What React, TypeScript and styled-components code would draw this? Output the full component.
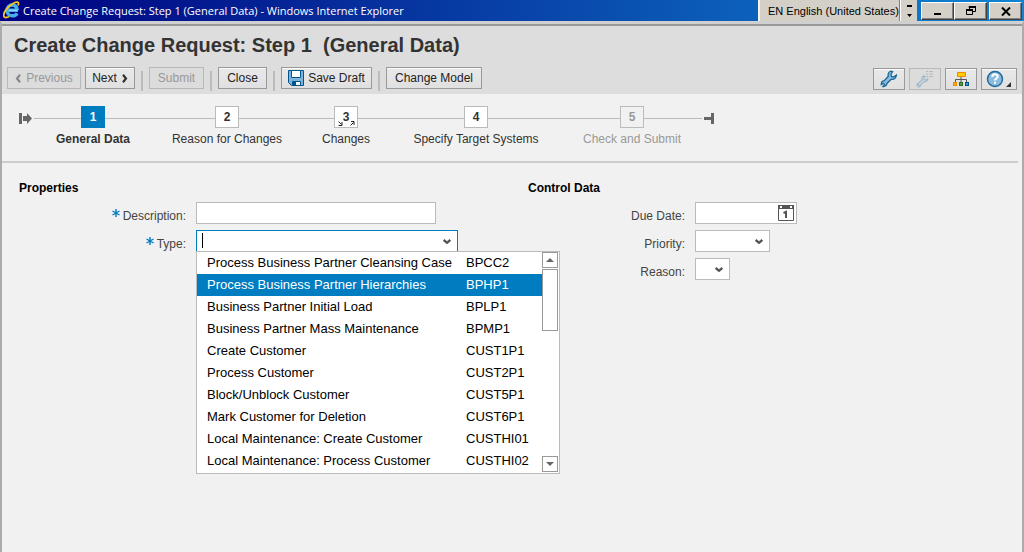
import React from "react";
import styled, { createGlobalStyle } from "styled-components";

const Global = createGlobalStyle`
  * { box-sizing: border-box; }
  body { margin: 0; background: #f1f1f1; color: #333; font: 12px/16px "Liberation Sans", Arial, sans-serif; }
  button, input, select { font: inherit; color: inherit; margin: 0; }
  svg { display: block; flex: none; }
`;

const Page = styled.div`
  display: flex;
  flex-direction: column;
  min-height: 100vh;
`;

const TitleBar = styled.header`
  display: flex;
  height: 21px;
  padding-left: 3px;
  background: linear-gradient(90deg, #000080, #1084d0);
  color: #fff;
`;

const WindowTitle = styled.div`
  flex: 1;
  padding-left: 3px;
  white-space: nowrap;
  font: 11px/21px "Open Sans", "Noto Sans", sans-serif;
`;

const LanguageBar = styled.div`
  display: flex;
  height: 22px;
  margin-right: 4px;
  background: #d4d0c8;
  border-left: 2px solid #f4f2ee;
  color: #000;
`;

const Language = styled.div`
  width: 140px;
  padding-left: 8px;
  border-right: 1px solid #808080;
  font-size: 11px;
  line-height: 22px;
  white-space: nowrap;
`;

const LanguageMenu = styled.button`
  display: flex;
  justify-content: center;
  align-items: center;
  width: 17px;
  padding: 0;
  border: 0;
  border-left: 1px solid #fff;
  background: #d4d0c8;
`;

const CaptionButton = styled.button<{ $spaced?: boolean }>`
  display: flex;
  align-items: center;
  justify-content: center;
  width: 33px;
  height: 18px;
  margin: 2px 0 0 ${(p) => (p.$spaced ? 2 : 0)}px;
  padding: 0;
  background: #d4d0c8;
  border: 1px solid;
  border-color: #fff #404040 #404040 #fff;
  box-shadow: inset -1px -1px #808080;
  &:last-child { margin-right: 2px; }
`;

const Frame = styled.div`
  flex: 1;
  border: 2px solid #ababab;
  border-top: 3px solid #d0d0d0;
  border-bottom: 0;
`;

const Head = styled.div`
  padding: 7px 5px 3px;
  background: #ddd;
  border-top: 2px solid #999;
`;

const Heading = styled.h1`
  margin: 0 0 10px;
  padding-left: 7px;
  font-size: 20px;
  line-height: 24px;
  color: #333;
  white-space: pre;
`;

const Toolbar = styled.div`
  display: flex;
  align-items: flex-start;
  gap: 6px;
`;

const Pair = styled.div`
  display: flex;
  gap: 4px;
`;

const ToolButton = styled.button<{ $w: number }>`
  display: flex;
  align-items: center;
  justify-content: center;
  gap: 4px;
  width: ${(p) => p.$w}px;
  height: 22px;
  padding: 0;
  white-space: nowrap;
  color: #222;
  background: linear-gradient(#e9e9e9, #e0e0e0);
  border: 1px solid #999;
  box-shadow: inset 0 1px #fafafa;
  &:disabled { color: #999; background: #dcdcdc; border-color: #b8b8b8; box-shadow: none; }
`;

const Divider = styled.span`
  width: 2px;
  height: 20px;
  margin-top: 4px;
  background: #bcbcbc;
`;

const Icons = styled.div`
  display: flex;
  gap: 4px;
  margin: 1px 0 0 auto;
`;

const RoadMap = styled.nav`
  display: flex;
  padding: 12px 0 14px 17px;
  margin-right: 4px;
  border-bottom: 2px solid #ccc;
`;

const Steps = styled.ol`
  display: flex;
  margin: 0 2px;
  padding: 0;
  list-style: none;
  background: linear-gradient(#bbb, #bbb) 0 12px / 100% 1px no-repeat;
`;

const Step = styled.li<{ $w: number; $state?: "current" | "disabled" }>`
  display: flex;
  flex-direction: column;
  align-items: center;
  gap: 3px;
  width: ${(p) => p.$w}px;
  white-space: nowrap;
  color: ${(p) => (p.$state === "disabled" ? "#999" : "#333")};
  font-weight: ${(p) => (p.$state === "current" ? "bold" : "normal")};
`;

const StepNumber = styled.span<{ $state?: "current" | "disabled" }>`
  position: relative;
  width: 24px;
  height: 22px;
  border: 1px solid ${(p) => (p.$state === "current" ? "#007cc0" : "#bbb")};
  background: ${(p) => (p.$state === "current" ? "#007cc0" : p.$state === "disabled" ? "#f1f1f1" : "#fff")};
  color: ${(p) => (p.$state === "current" ? "#fff" : "inherit")};
  font-weight: bold;
  line-height: 20px;
  text-align: center;
`;

const Expand = styled.svg`
  position: absolute;
  left: 3px;
  bottom: 1px;
`;

const StepLabel = styled.span`
  line-height: 16px;
`;

const Form = styled.form`
  display: grid;
  grid-template-columns: 509px minmax(280px, 1fr);
  padding: 17px 0 0 17px;
`;

const Group = styled.fieldset`
  display: flex;
  flex-direction: column;
  gap: 6px;
  min-width: 0;
  margin: 0;
  padding: 0;
  border: 0;
`;

const GroupTitle = styled.legend`
  padding: 0 0 6px;
  font-weight: bold;
  color: #000;
`;

const Row = styled.div`
  display: flex;
  gap: 10px;
  height: 22px;
`;

const Label = styled.label`
  display: flex;
  justify-content: flex-end;
  gap: 3px;
  width: 167px;
  line-height: 28px;
  color: #444;
  ${Group} + ${Group} & { width: 157px; }
`;

const Control = styled.div<{ $w: number }>`
  position: relative;
  width: ${(p) => p.$w}px;
  height: 22px;
`;

const Input = styled.input`
  width: 100%;
  height: 22px;
  padding: 0 5px;
  background: #fff;
  border: 1px solid #bbb;
  border-radius: 0;
  outline: 0;
  &[role="combobox"] { border-color: #007cc0; color: #000; }
`;

const Select = styled.select`
  appearance: none;
  width: 100%;
  height: 22px;
  padding: 0 5px;
  background: #fff;
  border: 1px solid #bbb;
  border-radius: 0;
`;

const Adornment = styled.span<{ $right: number; $top: number }>`
  position: absolute;
  right: ${(p) => p.$right}px;
  top: ${(p) => p.$top}px;
  pointer-events: none;
`;

const Caret = styled.span`
  position: absolute;
  left: 6px;
  top: 3px;
  width: 1px;
  height: 15px;
  background: #000;
`;

const Popup = styled.div`
  position: absolute;
  z-index: 1;
  top: 21px;
  left: 0;
  display: flex;
  width: 364px;
  padding-right: 1px;
  background: #fff;
  border: 1px solid #bbb;
`;

const Options = styled.ul`
  flex: 1;
  margin: 0;
  padding: 0 0 1px;
  list-style: none;
`;

const Option = styled.li`
  display: grid;
  grid-template-columns: 259px 1fr;
  padding-left: 10px;
  font-size: 13px;
  line-height: 22px;
  white-space: nowrap;
  color: #000;
  &[aria-selected="true"] { background: #007cc0; color: #fff; }
`;

const ScrollBar = styled.div`
  display: flex;
  flex-direction: column;
  width: 16px;
  padding-bottom: 1px;
`;

const ScrollButton = styled.button`
  display: flex;
  align-items: center;
  justify-content: center;
  width: 16px;
  height: 16px;
  padding: 0;
  background: #fff;
  border: 1px solid #999;
  &:last-child { margin-top: auto; }
`;

const Thumb = styled.div`
  height: 62px;
  margin-top: 1px;
  border: 1px solid #999;
`;

const Chevron = () => (
  <svg width="8" height="6" viewBox="0 0 8 6">
    <path d="M.7 1L4 3.800 7.300 1" fill="none" stroke="#555" strokeWidth="2.400" />
  </svg>
);

const Arrow = ({ left, color }: { left?: boolean; color: string }) => (
  <svg width="7" height="9" viewBox="0 0 7 9">
    <path d={left ? "M5 .7L2 4.5l3 3.8" : "M2 .7l3 3.8-3 3.8"} fill="none" stroke={color} strokeWidth="2.2" />
  </svg>
);

const Required = () => (
  <svg width="8" height="8" viewBox="0 0 8 8">
    <path d="M4 0v8M.5 2l7 4M7.5 2l-7 4" stroke="#007cc0" strokeWidth="1.4" />
  </svg>
);

const RequiredMark = styled.span`
  padding-top: 7px;
`;

const IeLogo = () => (
  <svg width="17" height="20" viewBox="0 0 17 20">
    <path d="M15 10.200H5.200M14.300 10.400C14 6.900 11.900 5 9.200 5c-3.200 0-5.200 2.300-5.200 5.400s2.200 5.400 5.400 5.400c2.200 0 3.800-.9 4.700-2.500" fill="none" stroke="#45b0ea" strokeWidth="3.400" />
    <path d="M14.800 10.200H6" stroke="#a9e2fb" strokeWidth="1" />
    <path d="M15 5.500C16.500 2 14.500 1 10.500 3.200 4.500 6.500-.5 13.200 1 16.600c.7 1.500 3 1 5-.2" fill="none" stroke="#f3c522" strokeWidth="1.800" />
  </svg>
);

const Floppy = () => (
  <svg width="16" height="16" viewBox="0 0 16 16">
    <path d="M.5.5h15v15h-12l-3-3z" fill="#7fb2da" stroke="#00568c" />
    <path d="M3.500.500h9v7h-9z" fill="#fff" stroke="#00568c" />
    <path d="M4.500 11.500h8v4h-8z" fill="#fff" stroke="#00568c" />
    <path d="M5 12h3v3H5z" fill="#00568c" />
  </svg>
);

const wrenchPath =
  "M10.500 1.200C8.500 2.300 7.700 4 8.300 6.300L4.300 10.700C2.400 10.900 1.200 12.300 1.300 14.500L3.200 13.300 4.500 14.600 3 16.500C5.200 16.700 6.700 15.600 6.900 13.400L11.300 9.300C14 9.800 16.300 8.200 16.400 5.100L13.600 7 11.500 6.500 10.900 4.300 12.600 1.700Z";

const Wrench = () => (
  <svg width="18" height="18" viewBox="0 0 18 18">
    <path d={wrenchPath} fill="#8dbbdf" stroke="#1b6797" strokeWidth="1.300" />
  </svg>
);

const WrenchList = () => (
  <svg width="18" height="18" viewBox="0 0 18 18">
    <g transform="translate(0 5) scale(.72)">
      <path d={wrenchPath} fill="#c6d4de" stroke="#9eb8c9" strokeWidth="1.500" />
    </g>
    <path d="M10 1.500h2M13 1.500h4M10 4h2M13 4h4M10 6.500h2M13 6.500h4" stroke="#b8b8b8" />
  </svg>
);

const Hierarchy = () => (
  <svg width="16" height="16" viewBox="0 0 16 16">
    <path d="M8 5v7M2.500 12V8.500h11V12" fill="none" stroke="#555" />
    <path d="M4.500 1.500h8v4h-8z" fill="#fc0" stroke="#f08a00" />
    <path d="M.600 11.600h2.800v2.800H.600z" fill="#fc0" stroke="#f08a00" strokeWidth="1.200" />
    <path d="M6.600 11.600h2.800v2.800H6.600z" fill="#79b943" stroke="#2e6b2e" strokeWidth="1.200" />
    <path d="M12.600 11.600h2.800v2.800h-2.800z" fill="#8dbbdf" stroke="#00568c" strokeWidth="1.200" />
  </svg>
);

const Help = () => (
  <svg width="26" height="18" viewBox="0 0 26 18">
    <circle cx="9" cy="9" r="7.500" fill="#8dbbdf" stroke="#1b6797" strokeWidth="1.400" />
    <path d="M6.300 7C6.300 3.500 11.700 3.600 11.700 6.500 11.700 8.500 9 8.400 9 10.500M9 11.700v2" fill="none" stroke="#fff" strokeWidth="2" />
    <path d="M25 12v5h-5z" fill="#333" />
  </svg>
);

const Calendar = () => (
  <svg width="16" height="16" viewBox="0 0 16 16">
    <path d="M.500.500h15v15H.500z" fill="#fff" stroke="#555" />
    <path d="M0 0h16v4H0z" fill="#555" />
    <path d="M2 1h2v2H2zM12 1h2v2h-2z" fill="#fff" />
    <path d="M5.500 8L8 6.800V13" fill="none" stroke="#555" strokeWidth="2" />
  </svg>
);

const types: [string, string][] = [
  ["Process Business Partner Cleansing Case", "BPCC2"],
  ["Process Business Partner Hierarchies", "BPHP1"],
  ["Business Partner Initial Load", "BPLP1"],
  ["Business Partner Mass Maintenance", "BPMP1"],
  ["Create Customer", "CUST1P1"],
  ["Process Customer", "CUST2P1"],
  ["Block/Unblock Customer", "CUST5P1"],
  ["Mark Customer for Deletion", "CUST6P1"],
  ["Local Maintenance: Create Customer", "CUSTHI01"],
  ["Local Maintenance: Process Customer", "CUSTHI02"],
];

const steps: { label: string; width: number; state?: "current" | "disabled"; expandable?: boolean }[] = [
  { label: "General Data", width: 118, state: "current" },
  { label: "Reason for Changes", width: 150 },
  { label: "Changes", width: 88, expandable: true },
  { label: "Specify Target Systems", width: 172 },
  { label: "Check and Submit", width: 140, state: "disabled" },
];

export default function App() {
  return (
    <Page>
      <Global />
      <TitleBar>
        <IeLogo />
        <WindowTitle>Create Change Request: Step 1 (General Data) - Windows Internet Explorer</WindowTitle>
        <LanguageBar>
          <Language>EN English (United States)</Language>
          <LanguageMenu type="button" aria-label="Language options">
            <svg width="5" height="12" viewBox="0 0 5 12"><path d="M0 0h5v2H0zM0 9h5l-2.500 3z" /></svg>
          </LanguageMenu>
        </LanguageBar>
        <CaptionButton type="button" aria-label="Minimize">
          <svg width="10" height="10"><path d="M1 7h7v2H1z" /></svg>
        </CaptionButton>
        <CaptionButton type="button" aria-label="Restore">
          <svg width="10" height="10" viewBox="0 0 10 10">
            <path d="M3.500 3V1.500h6v4H7M2.500 1h7.500M.500 4.500h6v4h-6zM0 4.500h7" fill="none" stroke="#000" />
            <path d="M3 0h7v2H3zM0 3h7v2H0z" />
          </svg>
        </CaptionButton>
        <CaptionButton type="button" aria-label="Close window" $spaced>
          <svg width="10" height="9" viewBox="0 0 10 9"><path d="M1 .500l8 8M9 .500l-8 8" stroke="#000" strokeWidth="2" /></svg>
        </CaptionButton>
      </TitleBar>
      <Frame>
        <Head>
          <Heading>{"Create Change Request: Step 1  (General Data)"}</Heading>
          <Toolbar>
            <Pair>
              <ToolButton type="button" $w={74} disabled><Arrow left color="#888" />Previous</ToolButton>
              <ToolButton type="button" $w={50}>Next<Arrow color="#333" /></ToolButton>
            </Pair>
            <Divider />
            <ToolButton type="button" $w={55} disabled>Submit</ToolButton>
            <Divider />
            <ToolButton type="button" $w={49}>Close</ToolButton>
            <Divider />
            <ToolButton type="button" $w={91}><Floppy />Save Draft</ToolButton>
            <Divider />
            <ToolButton type="button" $w={96}>Change Model</ToolButton>
            <Icons>
              <ToolButton type="button" $w={32} aria-label="Personalize"><Wrench /></ToolButton>
              <ToolButton type="button" $w={32} aria-label="Configure list" disabled><WrenchList /></ToolButton>
              <ToolButton type="button" $w={32} aria-label="Hierarchy"><Hierarchy /></ToolButton>
              <ToolButton type="button" $w={36} aria-label="Help"><Help /></ToolButton>
            </Icons>
          </Toolbar>
        </Head>
        <RoadMap aria-label="Steps">
          <svg width="13" height="24" viewBox="0 0 13 24">
            <path d="M0 7h3v11H0zM4 10h4V7l5 5.500-5 5.500v-3H4z" fill="#666" />
          </svg>
          <Steps>
            {steps.map((s, i) => (
              <Step key={s.label} $w={s.width} $state={s.state} aria-current={s.state === "current" ? "step" : undefined}>
                <StepNumber $state={s.state}>
                  {i + 1}
                  {s.expandable && (
                    <Expand width="17" height="5" viewBox="0 0 17 5">
                      <path d="M.500.500L3.500 3.500M4 1v3.500H.500M12.500 4.500l3-3M13 .500h3V4" fill="none" stroke="#222" />
                    </Expand>
                  )}
                </StepNumber>
                <StepLabel>{s.label}</StepLabel>
              </Step>
            ))}
          </Steps>
          <svg width="11" height="24" viewBox="0 0 11 24">
            <path d="M0 11h7V7h3v11H7v-4H0z" fill="#666" />
          </svg>
        </RoadMap>
        <Form>
          <Group>
            <GroupTitle>Properties</GroupTitle>
            <Row>
              <Label htmlFor="description"><RequiredMark><Required /></RequiredMark>Description:</Label>
              <Control $w={240}><Input id="description" /></Control>
            </Row>
            <Row>
              <Label htmlFor="type"><RequiredMark><Required /></RequiredMark>Type:</Label>
              <Control $w={262}>
                <Input id="type" role="combobox" aria-expanded="true" aria-controls="type-options" />
                <Caret />
                <Adornment $right={7} $top={9}><Chevron /></Adornment>
                <Popup>
                  <Options id="type-options" role="listbox" aria-label="Type">
                    {types.map(([name, code]) => (
                      <Option key={code} role="option" aria-selected={code === "BPHP1"}>
                        <span>{name}</span>
                        <span>{code}</span>
                      </Option>
                    ))}
                  </Options>
                  <ScrollBar>
                    <ScrollButton type="button" aria-label="Scroll up">
                      <svg width="8" height="4"><path d="M0 4l4-4 4 4z" fill="#666" /></svg>
                    </ScrollButton>
                    <Thumb />
                    <ScrollButton type="button" aria-label="Scroll down">
                      <svg width="8" height="4"><path d="M0 0l4 4 4-4z" fill="#666" /></svg>
                    </ScrollButton>
                  </ScrollBar>
                </Popup>
              </Control>
            </Row>
          </Group>
          <Group>
            <GroupTitle>Control Data</GroupTitle>
            <Row>
              <Label htmlFor="due">Due Date:</Label>
              <Control $w={102}>
                <Input id="due" />
                <Adornment $right={3} $top={3}><Calendar /></Adornment>
              </Control>
            </Row>
            <Row>
              <Label htmlFor="priority">Priority:</Label>
              <Control $w={75}>
                <Select id="priority" />
                <Adornment $right={7} $top={9}><Chevron /></Adornment>
              </Control>
            </Row>
            <Row>
              <Label htmlFor="reason">Reason:</Label>
              <Control $w={35}>
                <Select id="reason" />
                <Adornment $right={7} $top={9}><Chevron /></Adornment>
              </Control>
            </Row>
          </Group>
        </Form>
      </Frame>
    </Page>
  );
}
